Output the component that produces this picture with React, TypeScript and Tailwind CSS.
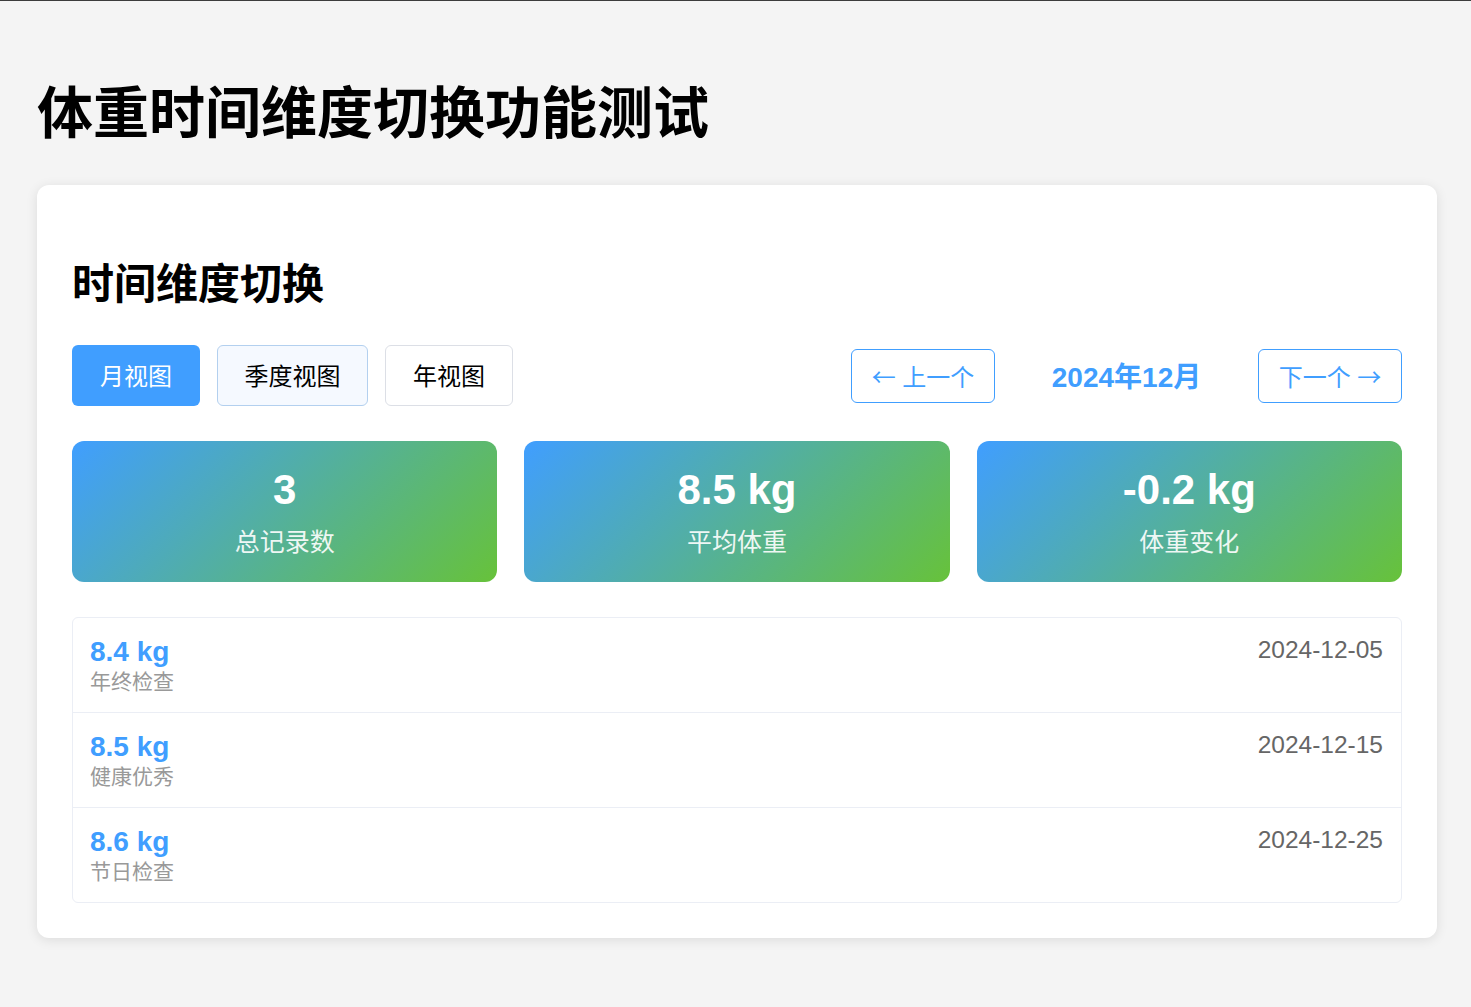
const FONT = { fontFamily: '"Liberation Sans", "Noto Sans CJK SC", sans-serif' };

const stats = [
  { value: "3", label: "总记录数" },
  { value: "8.5 kg", label: "平均体重" },
  { value: "-0.2 kg", label: "体重变化" },
];

const records = [
  { weight: "8.4 kg", note: "年终检查", date: "2024-12-05" },
  { weight: "8.5 kg", note: "健康优秀", date: "2024-12-15" },
  { weight: "8.6 kg", note: "节日检查", date: "2024-12-25" },
];

export default function App() {
  return (
    <div
      style={FONT}
      className="min-h-[1007px] bg-[#f4f4f4] border-t border-[#3c3c3c] pl-[37px] pr-[34px] pt-[85px] pb-[69px]"
    >
      <h1 className="text-[56px] leading-none font-bold text-black">体重时间维度切换功能测试</h1>

      <div className="mt-[43px] bg-white rounded-xl shadow-[0_2px_12px_rgba(0,0,0,0.1)] p-[35px]">
        <h2 className="mt-[44px] text-[42px] leading-none font-bold text-black">时间维度切换</h2>

        {/* Toolbar */}
        <div className="mt-[39px] flex items-center justify-between">
          <div className="flex items-center gap-[17px]">
            <button className="w-[128px] h-[61px] pt-[3px] rounded-md bg-[#409eff] text-white text-[24px]">
              月视图
            </button>
            <button className="w-[151px] h-[61px] pt-[3px] rounded-md bg-[#f5f9ff] border border-[#b3d0ef] text-black text-[24px]">
              季度视图
            </button>
            <button className="w-[128px] h-[61px] pt-[3px] rounded-md bg-white border border-[#dcdfe6] text-black text-[24px]">
              年视图
            </button>
          </div>
          <div className="flex items-center">
            <button className="w-[144px] h-[54px] pt-[3px] rounded-md border border-[#409eff] text-[#409eff] text-[24px]">
              <span className="font-['Noto_Sans_CJK_SC']">←</span> 上一个
            </button>
            <div className="w-[263px] pt-[5px] text-center text-[28px] font-bold text-[#409eff]">2024年12月</div>
            <button className="w-[144px] h-[54px] pt-[3px] rounded-md border border-[#409eff] text-[#409eff] text-[24px]">
              下一个 <span className="font-['Noto_Sans_CJK_SC']">→</span>
            </button>
          </div>
        </div>

        {/* Stats */}
        <div className="mt-[35px] grid grid-cols-3 gap-[27px]">
          {stats.map((s) => (
            <div
              key={s.label}
              className="h-[141px] rounded-xl bg-[linear-gradient(135deg,#409eff,#67c23a)] text-white flex flex-col items-center pt-[28px]"
            >
              <div className="text-[42px] leading-none font-bold">{s.value}</div>
              <div className="mt-[19px] text-[25px] leading-none opacity-90">{s.label}</div>
            </div>
          ))}
        </div>

        {/* Records */}
        <div className="mt-[35px] border border-[#ebeef5] rounded-md">
          {records.map((r, i) => (
            <div
              key={r.date}
              className={
                "flex items-start justify-between pl-[17px] pr-[18px] pt-[20px] pb-[20px] " +
                (i > 0 ? "border-t border-[#ebeef5]" : "")
              }
            >
              <div>
                <div className="text-[28px] leading-none font-bold text-[#409eff]">{r.weight}</div>
                <div className="mt-[5px] text-[21px] leading-none text-[#999]">{r.note}</div>
              </div>
              <div className="text-[24.5px] leading-none text-[#666]">{r.date}</div>
            </div>
          ))}
        </div>
      </div>
    </div>
  );
}
